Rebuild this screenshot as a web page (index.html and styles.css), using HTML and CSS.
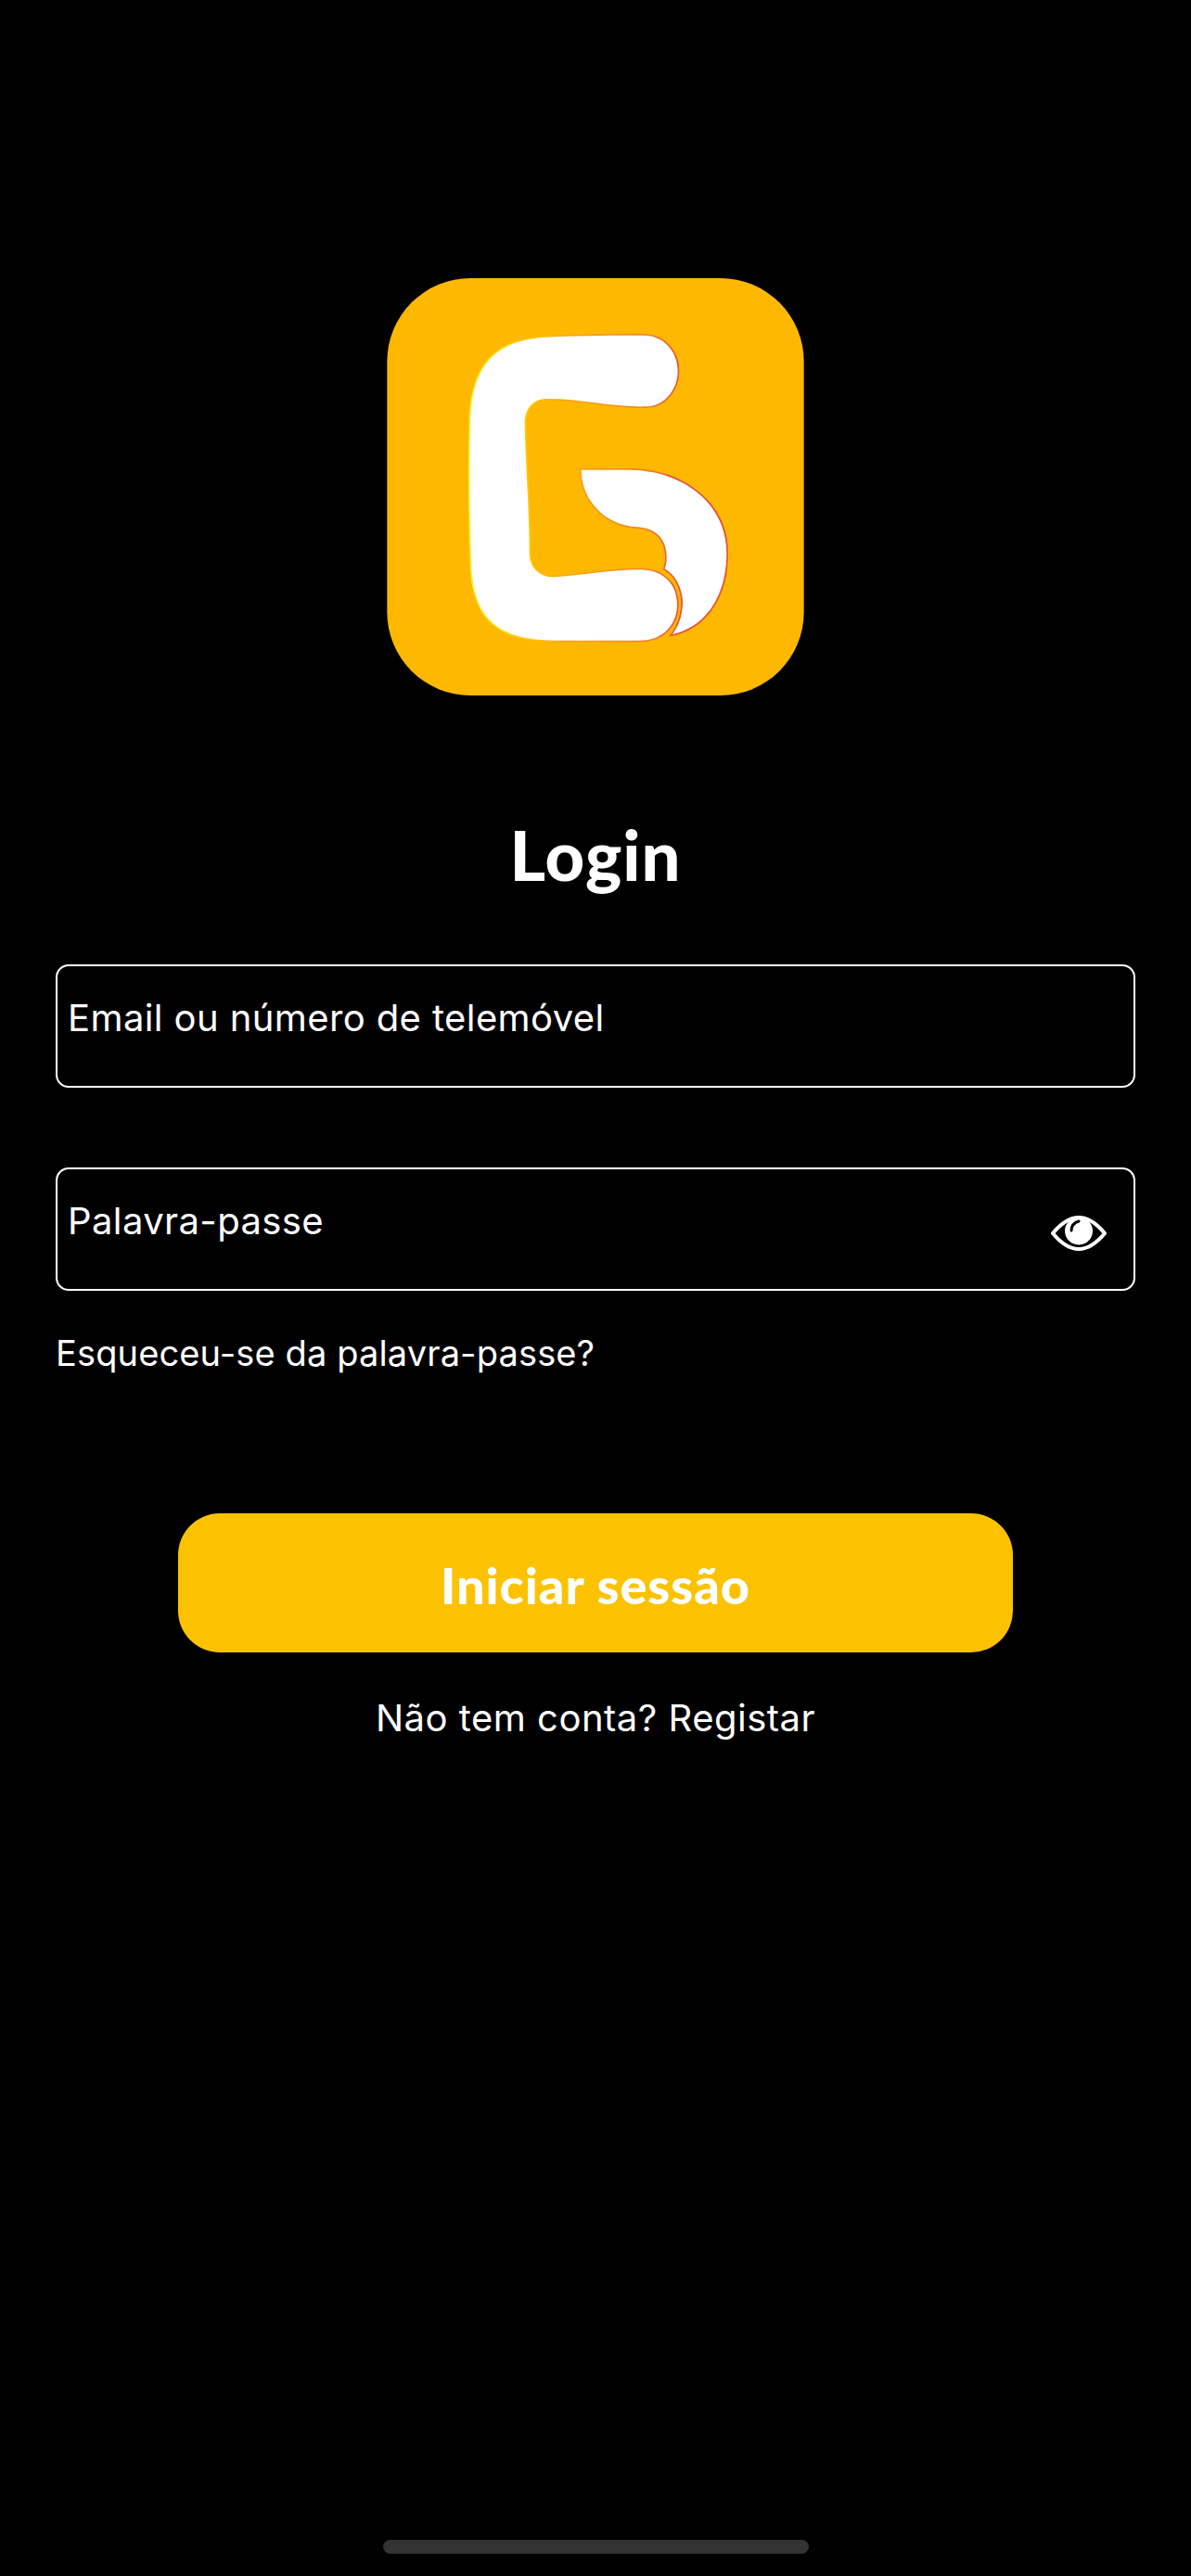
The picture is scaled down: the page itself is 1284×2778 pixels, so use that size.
FILE: index.html
```html
<!DOCTYPE html>
<html lang="pt">
<head>
  <meta charset="UTF-8">
  <meta name="viewport" content="width=device-width, initial-scale=1">
  <title>Login</title>
  <link rel="stylesheet" href="styles.css">
</head>
<body>
  <div class="screen">
    <svg class="logo" viewBox="52 60 1348 1350" aria-hidden="true">
      <defs>
        <linearGradient id="edge" gradientUnits="userSpaceOnUse" x1="320" y1="0" x2="1150" y2="0">
          <stop offset="0" stop-color="#ffee22"/>
          <stop offset="0.2" stop-color="#ffd000"/>
          <stop offset="0.35" stop-color="#ffa90a"/>
          <stop offset="0.7" stop-color="#f0802a"/>
          <stop offset="0.82" stop-color="#e8503a"/>
          <stop offset="1" stop-color="#e8503a"/>
        </linearGradient>
        <g id="mark">
          <path d="M880 245C950 245 992 300 992 360C992 425 945 475 890 475C780 478 680 450 570 450C525 450 497 480 497 530C500 680 512 800 512 950C512 995 545 1027 590 1027C680 1022 780 1003 870 1003C945 1003 990 1050 990 1115C990 1180 945 1232 870 1232L590 1232C420 1230 335 1170 325 1000C318 800 318 650 322 500C335 320 420 255 590 250C690 245 790 245 880 245Z"/>
          <path d="M680 680L830 680C1010 680 1150 790 1150 950C1150 1090 1080 1190 975 1212C1000 1180 1008 1140 1008 1105C1005 1060 985 1020 950 1000C965 960 960 870 860 865C760 860 680 780 680 680Z"/>
        </g>
      </defs>
      <rect x="52" y="60" width="1348" height="1350" rx="270" fill="#ffb800"/>
      <use href="#mark" fill="#fff" stroke="url(#edge)" stroke-width="10"/>
      <use href="#mark" fill="#fff"/>
    </svg>

    <h1 class="title">Login</h1>

    <form class="form">
      <div class="field">
        <span class="field-label">Email ou número de telemóvel</span>
      </div>
      <div class="field field-password">
        <span class="field-label">Palavra-passe</span>
        <svg class="eye" viewBox="0 0 60 38" aria-hidden="true">
          <path d="M2 19C12 7 21 2 30 2C39 2 48 7 58 19C48 31 39 36 30 36C21 36 12 31 2 19Z" fill="none" stroke="#fff" stroke-width="4" stroke-linejoin="round"/>
          <circle cx="30" cy="16.500" r="15" fill="#fff"/>
          <path d="M22 16C22 11 25 7.500 30 6" fill="none" stroke="#000" stroke-width="3" stroke-linecap="round"/>
        </svg>
      </div>
      <a class="forgot">Esqueceu-se da palavra-passe?</a>
      <button type="button" class="btn-login">Iniciar sessão</button>
    </form>

    <p class="register">Não tem conta? Registar</p>

    <div class="home-bar"></div>
  </div>
</body>
</html>
```

FILE: styles.css
```css
* {
  box-sizing: border-box;
  margin: 0;
  padding: 0;
}

body {
  background: #000;
  color: #fff;
  font-family: 'Inter', sans-serif;
}

.screen {
  min-height: 2778px;
  display: flex;
  flex-direction: column;
  align-items: center;
  padding: 300px 60px 24px;
}

.logo {
  display: block;
  width: 450px;
  height: 450px;
}

.title {
  margin-top: 132px;
  font-family: 'Lato', sans-serif;
  font-size: 74px;
  font-weight: 900;
  line-height: 80px;
  letter-spacing: 1px;
}

.form {
  width: 100%;
  margin-top: 78px;
  display: flex;
  flex-direction: column;
}

.field {
  height: 133px;
  border: 2px solid #fff;
  border-radius: 14px;
  padding: 30px 12px 0 11px;
  display: flex;
  justify-content: space-between;
  align-items: flex-start;
}

.field-label {
  font-size: 40px;
  line-height: 52px;
  letter-spacing: 0.4px;
}

.field-password {
  margin-top: 86px;
}

.eye {
  width: 60px;
  height: 38px;
  margin: 20px 17px 0 0;
}

.forgot {
  margin-top: 44px;
  font-size: 38px;
  line-height: 46px;
  letter-spacing: 0.13px;
}

.btn-login {
  align-self: center;
  width: 900px;
  height: 150px;
  margin-top: 150px;
  padding-top: 4px;
  border: none;
  border-radius: 45px;
  background: #fcc200;
  color: #fff;
  font-family: 'Lato', sans-serif;
  font-size: 54px;
  font-weight: 900;
  letter-spacing: 1px;
}

.register {
  margin-top: 46px;
  font-size: 40px;
  line-height: 50px;
  letter-spacing: 0.5px;
}

.home-bar {
  width: 459px;
  height: 15px;
  margin-top: auto;
  border-radius: 8px;
  background: #333;
}
```
